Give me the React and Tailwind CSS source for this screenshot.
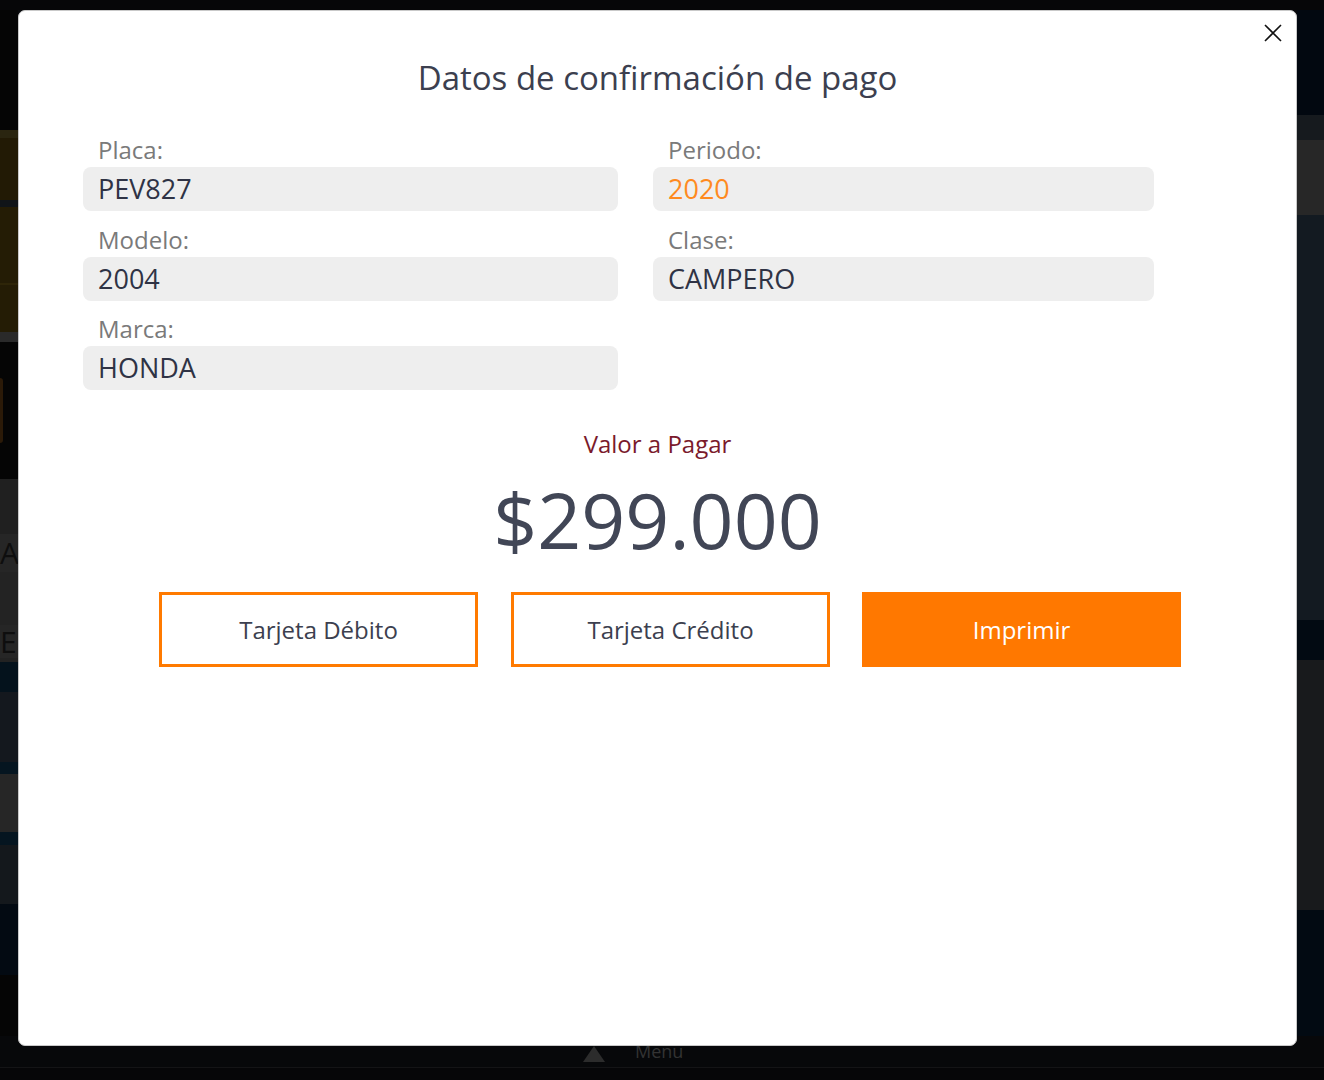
import React from "react";

const font = { fontFamily: '"Open Sans", "Noto Sans", sans-serif' };

function Field({ label, value, valueClass = "text-[#2f3345]", width }) {
  return (
    <div className={`flex flex-col ${width}`}>
      <div className="pl-[15px] text-[24px] leading-[34px] text-[#7a7a7a]">{label}</div>
      <div className={`h-[44px] rounded-[8px] bg-[#eeeeee] pl-[15px] text-[27px] leading-[44px] ${valueClass}`}>
        {value}
      </div>
    </div>
  );
}

export default function App() {
  return (
    <div className="relative h-[1080px] w-[1324px] overflow-hidden bg-[#060608]" style={font}>
      {/* dimmed page behind */}
      <div className="flex h-[1036px] pt-[10px]">
        <div className="flex w-[18px] flex-col">
          <div className="h-[120px] bg-[#050505]" />
          <div className="h-[8px] bg-[#2a2510]" />
          <div className="h-[62px] bg-[#221a05]" />
          <div className="h-[7px] bg-[#101418]" />
          <div className="h-[76px] bg-[#241c05]" />
          <div className="h-[2px] bg-[#2e2508]" />
          <div className="h-[47px] bg-[#241c05]" />
          <div className="h-[10px] bg-[#2a2a2a]" />
          <div className="flex h-[137px] items-center bg-[#050505]">
            <div className="h-[65px] w-[3px] rounded-r bg-[#2b1a08]" />
          </div>
          <div className="h-[55px] bg-[#202020]" />
          <div className="h-[38px] bg-[#262626] text-[30px] leading-[38px] text-[#0e0e0e]">A</div>
          <div className="h-[53px] bg-[#232323]" />
          <div className="h-[33px] bg-[#262626] text-[30px] leading-[33px] text-[#0e0e0e] whitespace-nowrap">EF</div>
          <div className="h-[4px] bg-[#222222]" />
          <div className="h-[30px] bg-[#04121c]" />
          <div className="h-[70px] bg-[#14181e]" />
          <div className="h-[12px] bg-[#051520]" />
          <div className="h-[58px] bg-[#262626]" />
          <div className="h-[13px] bg-[#051520]" />
          <div className="h-[59px] bg-[#14181c]" />
          <div className="h-[71px] bg-[#030a12]" />
          <div className="flex-1 bg-[#050505]" />
        </div>
        <div className="flex-1 bg-[#08090c]" />
        <div className="flex w-[27px] flex-col">
          <div className="h-[105px] bg-[#020810]" />
          <div className="h-[25px] bg-[#161a1e]" />
          <div className="h-[75px] bg-[#272727]" />
          <div className="h-[405px] bg-[#131a21]" />
          <div className="h-[40px] bg-[#020a12]" />
          <div className="h-[250px] bg-[#181a1c]" />
          <div className="flex-1 bg-[#020a12]" />
        </div>
      </div>
      <div className="flex h-[32px] items-start border-b border-[#141416] bg-[#07080a] pl-[583px]">
        <div className="mt-[10px] h-0 w-0 border-x-[11px] border-b-[16px] border-x-transparent border-b-[#2c2c2c]" />
        <div className="ml-[30px] mt-[4px] text-[18px] leading-[22px] text-[#333333]">Menu</div>
      </div>

      {/* modal */}
      <div className="absolute left-[18px] top-[10px] flex h-[1036px] w-[1279px] flex-col rounded-[7px] border border-[#c9c9c9] bg-white pt-[45px]">
        <button className="absolute right-[12px] top-[11px] flex h-[22px] w-[22px] items-center justify-center">
          <svg width="18" height="18" viewBox="0 0 18 18">
            <path d="M1 1 L17 17 M17 1 L1 17" stroke="#111" strokeWidth="1.6" fill="none" />
          </svg>
        </button>
        <div className="text-center text-[33px] leading-[44px] text-[#3c3f4f]">Datos de confirmación de pago</div>
        <div className="ml-[64px] mt-[33px] flex gap-[35px]">
          <div className="flex flex-col gap-[11.5px]">
            <Field label="Placa:" value="PEV827" width="w-[535px]" />
            <Field label="Modelo:" value="2004" width="w-[535px]" />
            <Field label="Marca:" value="HONDA" width="w-[535px]" />
          </div>
          <div className="flex flex-col gap-[11.5px]">
            <Field label="Periodo:" value="2020" valueClass="text-[#ff8a1f]" width="w-[501px]" />
            <Field label="Clase:" value="CAMPERO" width="w-[501px]" />
          </div>
        </div>
        <div className="mt-[38px] text-center text-[24px] leading-[32px] text-[#7a1a2b]">Valor a Pagar</div>
        <div className="mt-[20px] text-center text-[77px] leading-[80px] text-[#414656]">$299.000</div>
        <div className="ml-[140px] mt-[32px] flex">
          <button className="h-[75px] w-[319px] border-[3px] border-[#ff7a00] bg-white text-[24px] text-[#3c3f4f]">
            Tarjeta Débito
          </button>
          <button className="ml-[33px] h-[75px] w-[319px] border-[3px] border-[#ff7a00] bg-white text-[24px] text-[#3c3f4f]">
            Tarjeta Crédito
          </button>
          <button className="ml-[32px] h-[75px] w-[319px] bg-[#ff7800] text-[24px] text-white">Imprimir</button>
        </div>
      </div>
    </div>
  );
}
